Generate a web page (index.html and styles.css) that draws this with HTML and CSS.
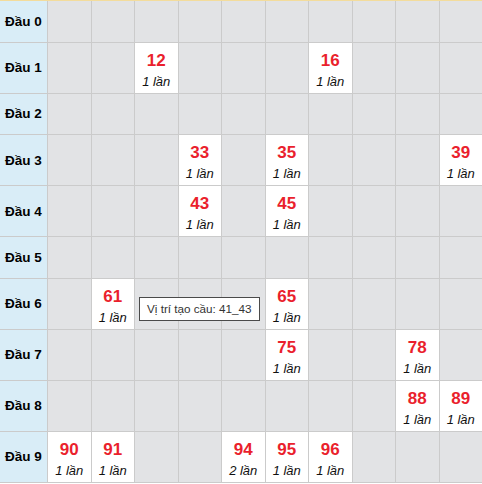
FILE: index.html
```html
<!DOCTYPE html>
<html lang="vi">
<head>
<meta charset="utf-8">
<title>Bảng đầu</title>
<link rel="stylesheet" href="styles.css">
</head>
<body>
<div class="board">
  <div class="grid">
    <div class="row"><div class="head">Đầu 0</div><div class="cell"></div><div class="cell"></div><div class="cell"></div><div class="cell"></div><div class="cell"></div><div class="cell"></div><div class="cell"></div><div class="cell"></div><div class="cell"></div><div class="cell"></div></div>
    <div class="row"><div class="head">Đầu 1</div><div class="cell"></div><div class="cell"></div><div class="cell hit"><b>12</b><i>1 lần</i></div><div class="cell"></div><div class="cell"></div><div class="cell"></div><div class="cell hit"><b>16</b><i>1 lần</i></div><div class="cell"></div><div class="cell"></div><div class="cell"></div></div>
    <div class="row"><div class="head">Đầu 2</div><div class="cell"></div><div class="cell"></div><div class="cell"></div><div class="cell"></div><div class="cell"></div><div class="cell"></div><div class="cell"></div><div class="cell"></div><div class="cell"></div><div class="cell"></div></div>
    <div class="row"><div class="head">Đầu 3</div><div class="cell"></div><div class="cell"></div><div class="cell"></div><div class="cell hit"><b>33</b><i>1 lần</i></div><div class="cell"></div><div class="cell hit"><b>35</b><i>1 lần</i></div><div class="cell"></div><div class="cell"></div><div class="cell"></div><div class="cell hit"><b>39</b><i>1 lần</i></div></div>
    <div class="row"><div class="head">Đầu 4</div><div class="cell"></div><div class="cell"></div><div class="cell"></div><div class="cell hit"><b>43</b><i>1 lần</i></div><div class="cell"></div><div class="cell hit"><b>45</b><i>1 lần</i></div><div class="cell"></div><div class="cell"></div><div class="cell"></div><div class="cell"></div></div>
    <div class="row"><div class="head">Đầu 5</div><div class="cell"></div><div class="cell"></div><div class="cell"></div><div class="cell"></div><div class="cell"></div><div class="cell"></div><div class="cell"></div><div class="cell"></div><div class="cell"></div><div class="cell"></div></div>
    <div class="row"><div class="head">Đầu 6</div><div class="cell"></div><div class="cell hit"><b>61</b><i>1 lần</i></div><div class="cell"></div><div class="cell"></div><div class="cell"></div><div class="cell hit"><b>65</b><i>1 lần</i></div><div class="cell"></div><div class="cell"></div><div class="cell"></div><div class="cell"></div></div>
    <div class="row"><div class="head">Đầu 7</div><div class="cell"></div><div class="cell"></div><div class="cell"></div><div class="cell"></div><div class="cell"></div><div class="cell hit"><b>75</b><i>1 lần</i></div><div class="cell"></div><div class="cell"></div><div class="cell hit"><b>78</b><i>1 lần</i></div><div class="cell"></div></div>
    <div class="row"><div class="head">Đầu 8</div><div class="cell"></div><div class="cell"></div><div class="cell"></div><div class="cell"></div><div class="cell"></div><div class="cell"></div><div class="cell"></div><div class="cell"></div><div class="cell hit"><b>88</b><i>1 lần</i></div><div class="cell hit"><b>89</b><i>1 lần</i></div></div>
    <div class="row"><div class="head">Đầu 9</div><div class="cell hit"><b>90</b><i>1 lần</i></div><div class="cell hit"><b>91</b><i>1 lần</i></div><div class="cell"></div><div class="cell"></div><div class="cell hit"><b>94</b><i>2 lần</i></div><div class="cell hit"><b>95</b><i>1 lần</i></div><div class="cell hit"><b>96</b><i>1 lần</i></div><div class="cell"></div><div class="cell"></div><div class="cell"></div></div>
  </div>
  <div class="tooltip">Vị trí tạo cầu: 41_43</div>
</div>
</body>
</html>
```

FILE: styles.css
```css
html, body {
  margin: 0;
  padding: 0;
  background: #ffffff;
}

body {
  font-family: "Liberation Sans", Arial, sans-serif;
  overflow: hidden;
}

.board {
  position: relative;
  width: 482px;
  border-top: 1px solid #f3dc9c;
}

.grid {
  display: flex;
  flex-direction: column;
  gap: 1px;
  background: #cbcbcb;
  padding-bottom: 1px;
}

.row {
  display: grid;
  grid-template-columns: 47px repeat(10, 1fr);
  gap: 1px;
  min-height: 40.5px;
}

.head {
  background: #d9edf7;
  color: #000;
  font-weight: bold;
  font-size: 13.5px;
  display: flex;
  align-items: center;
  justify-content: center;
  white-space: nowrap;
}

.cell {
  background: #e2e3e5;
}

.cell.hit {
  background: #ffffff;
  display: flex;
  flex-direction: column;
  align-items: center;
  padding-top: 8px;
  box-sizing: border-box;
  height: 50px;
}

.cell.hit b {
  color: #ea1f2d;
  font-size: 17px;
  font-weight: bold;
  line-height: 20px;
}

.cell.hit i {
  color: #111;
  font-size: 13px;
  font-style: italic;
  line-height: 22px;
  white-space: nowrap;
}

.tooltip {
  position: absolute;
  left: 139px;
  top: 296px;
  height: 24px;
  box-sizing: border-box;
  padding: 0 7px;
  border: 1px solid #4a4a4a;
  background: #ffffff;
  color: #333;
  font-size: 11.7px;
  line-height: 22px;
  white-space: nowrap;
}
```
